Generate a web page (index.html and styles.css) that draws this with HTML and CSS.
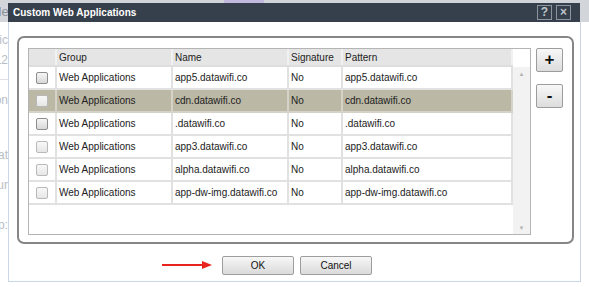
FILE: index.html
```html
<!DOCTYPE html>
<html lang="en">
<head>
    <meta charset="UTF-8">
    <meta name="viewport" content="width=device-width, initial-scale=1.0">
    <title>Custom Web Applications</title>
    <link rel="stylesheet" href="styles.css">
</head>
<body>
    <!-- page behind the modal -->
    <div class="page">
        <div class="page-nav">
            <span class="nav-item">Module</span>
            <span class="nav-tab"></span>
        </div>
        <div class="page-side">
            <div class="side-line">Traffic</div>
            <div class="side-line">L2</div>
            <div class="side-line rule"></div>
            <div class="side-line">Action</div>
            <div class="side-line gap-lg">Format</div>
            <div class="side-line gap-sm">Hour</div>
            <div class="side-line gap-md">Group:</div>
        </div>
    </div>

    <div class="dialog">
        <div class="dialog-title">
            <span>Custom Web Applications</span>
            <div class="title-tools">
                <span class="tool">?</span>
                <span class="tool">&#215;</span>
            </div>
        </div>

        <div class="dialog-body">
            <div class="frame">
                <div class="grid-wrap">
                    <table class="grid">
                        <thead>
                            <tr>
                                <th class="col-check"></th>
                                <th class="col-group">Group</th>
                                <th class="col-name">Name</th>
                                <th class="col-sig">Signature</th>
                                <th class="col-pattern">Pattern</th>
                            </tr>
                        </thead>
                        <tbody>
                            <tr>
                                <td class="col-check"><span class="check"></span></td>
                                <td>Web Applications</td>
                                <td>app5.datawifi.co</td>
                                <td>No</td>
                                <td>app5.datawifi.co</td>
                            </tr>
                            <tr class="selected">
                                <td class="col-check"><span class="check dim"></span></td>
                                <td>Web Applications</td>
                                <td>cdn.datawifi.co</td>
                                <td>No</td>
                                <td>cdn.datawifi.co</td>
                            </tr>
                            <tr>
                                <td class="col-check"><span class="check"></span></td>
                                <td>Web Applications</td>
                                <td>.datawifi.co</td>
                                <td>No</td>
                                <td>.datawifi.co</td>
                            </tr>
                            <tr>
                                <td class="col-check"><span class="check dim"></span></td>
                                <td>Web Applications</td>
                                <td>app3.datawifi.co</td>
                                <td>No</td>
                                <td>app3.datawifi.co</td>
                            </tr>
                            <tr>
                                <td class="col-check"><span class="check dim"></span></td>
                                <td>Web Applications</td>
                                <td>alpha.datawifi.co</td>
                                <td>No</td>
                                <td>alpha.datawifi.co</td>
                            </tr>
                            <tr>
                                <td class="col-check"><span class="check dim"></span></td>
                                <td>Web Applications</td>
                                <td>app-dw-img.datawifi.co</td>
                                <td>No</td>
                                <td>app-dw-img.datawifi.co</td>
                            </tr>
                        </tbody>
                    </table>
                    <div class="scrollbar">
                        <div class="scroll-head"></div>
                        <div class="scroll-track">
                            <span class="scroll-arrow">&#9650;</span>
                            <span class="scroll-arrow">&#9660;</span>
                        </div>
                    </div>
                </div>
                <div class="side-btns">
                    <button class="side-btn">+</button>
                    <button class="side-btn">-</button>
                </div>
            </div>

            <div class="footer">
                <svg class="pointer" width="52" height="10" viewBox="0 0 52 10">
                    <line x1="0" y1="5" x2="42" y2="5" stroke="#e8221c" stroke-width="2"/>
                    <polygon points="40,1 50,5 40,9" fill="#e8221c"/>
                </svg>
                <button class="btn">OK</button>
                <button class="btn">Cancel</button>
            </div>
        </div>
    </div>
</body>
</html>
```

FILE: styles.css
```css
body {
    margin: 0;
    font-family: "Liberation Sans", Arial, sans-serif;
    font-size: 10px;
    color: #222;
    background: #fff;
    overflow: hidden;
}

/* backdrop page */
.page {
    height: 287px;
}
.page-nav {
    height: 22px;
    background: #d2d6db;
    display: flex;
    align-items: center;
    margin-left: -34px;
}
.nav-item {
    color: #8a9099;
    font-size: 13px;
}
.nav-tab {
    width: 40px;
    height: 3px;
    margin-left: 215px;
    align-self: flex-start;
    background: #c3b8dd;
}
.page-side {
    width: 40px;
    margin-left: -32px;
    padding-top: 8px;
    text-align: right;
    color: #b8bec6;
    font-size: 12px;
}
.side-line {
    height: 20px;
    line-height: 20px;
}
.side-line.rule {
    height: 9px;
    border-bottom: 1px solid #dde1e6;
    margin-bottom: 10px;
}
.side-line.gap-lg { margin-top: 35px; }
.side-line.gap-sm { margin-top: 10px; }
.side-line.gap-md { margin-top: 20px; }

/* modal */
.dialog {
    position: absolute;
    left: 8px;
    top: 3px;
    width: 573px;
}
.dialog-title {
    height: 19px;
    background: #36404c;
    color: #fff;
    font-weight: bold;
    font-size: 10px;
    display: flex;
    align-items: center;
    justify-content: space-between;
    padding: 0 9px 0 5px;
    margin-right: 1px;
}
.title-tools {
    display: flex;
    gap: 4px;
}
.tool {
    width: 13px;
    height: 13px;
    border: 1px solid #8c949e;
    color: #bfc4cb;
    font-size: 12px;
    line-height: 13px;
    text-align: center;
}
.dialog-body {
    height: 260px;
    box-sizing: border-box;
    background: #fff;
    border: 1px solid #c8d6e6;
    border-top: none;
    padding: 14px 6px 0 8px;
}
.frame {
    display: flex;
    gap: 5px;
    height: 208px;
    box-sizing: border-box;
    border: 2px solid #868686;
    border-radius: 7px;
    padding: 10px 8px 7px 9px;
}

/* grid */
.grid-wrap {
    width: 503px;
    height: 187px;
    box-sizing: border-box;
    border: 1px solid #b4b4b4;
    display: flex;
}
.grid {
    width: 484px;
    border-collapse: collapse;
    table-layout: fixed;
    align-self: flex-start;
}
.grid th {
    height: 16px;
    background: #e5e5e5;
    font-weight: normal;
    text-align: left;
    padding: 0 2px;
    border-right: 2px solid #f1f1f1;
    border-bottom: 2px solid #dedede;
}
.grid td {
    height: 21px;
    padding: 0 2px;
    border: 2px solid #e1e1e1;
    white-space: nowrap;
    overflow: hidden;
}
.grid tr td:first-child,
.grid tr th:first-child {
    border-left: none;
}
.grid tr.selected td {
    background: #bbb8a5;
    border-color: #d5d3c8;
}
.col-check { width: 22px; }
.col-group { width: 110px; }
.col-name { width: 110px; }
.col-sig { width: 48px; }
.col-pattern { width: 164px; }
.grid td.col-check {
    padding: 0 2px;
    text-align: center;
}
.check {
    display: inline-block;
    width: 10px;
    height: 10px;
    vertical-align: middle;
    border: 1px solid #8e8e8e;
    border-radius: 2px;
    background: linear-gradient(#f6f6f6, #d8d8d8);
}
.check.dim {
    border-color: #b9b9b9;
    background: linear-gradient(#f8f8f8, #e6e6e6);
}

.scrollbar {
    flex: 1;
    display: flex;
    flex-direction: column;
}
.scroll-head {
    height: 18px;
    background: #fff;
}
.scroll-track {
    flex: 1;
    background: #f2f2f2;
    display: flex;
    flex-direction: column;
    justify-content: space-between;
    align-items: center;
    padding: 4px 0 3px;
}
.scroll-arrow {
    color: #b3b3b3;
    font-size: 6px;
    line-height: 6px;
}

.side-btns {
    display: flex;
    flex-direction: column;
    gap: 12px;
}
.side-btn {
    width: 27px;
    height: 24px;
    padding: 0;
    border: 1px solid #9c9c9c;
    border-radius: 2px;
    background: linear-gradient(#f8f8f8, #dcdcdc);
    font-family: "Liberation Sans", Arial, sans-serif;
    font-size: 17px;
    font-weight: bold;
    line-height: 20px;
    color: #111;
}

/* footer */
.footer {
    position: relative;
    display: flex;
    justify-content: center;
    gap: 6px;
    margin-top: 12px;
    padding-left: 3px;
}
.btn {
    width: 72px;
    height: 19px;
    padding: 0;
    border: 1px solid #9e9e9e;
    border-radius: 2px;
    background: linear-gradient(#f7f7f7, #dadada);
    font-family: "Liberation Sans", Arial, sans-serif;
    font-size: 10px;
    color: #111;
}
.pointer {
    position: absolute;
    left: 145px;
    top: 4px;
}
```
